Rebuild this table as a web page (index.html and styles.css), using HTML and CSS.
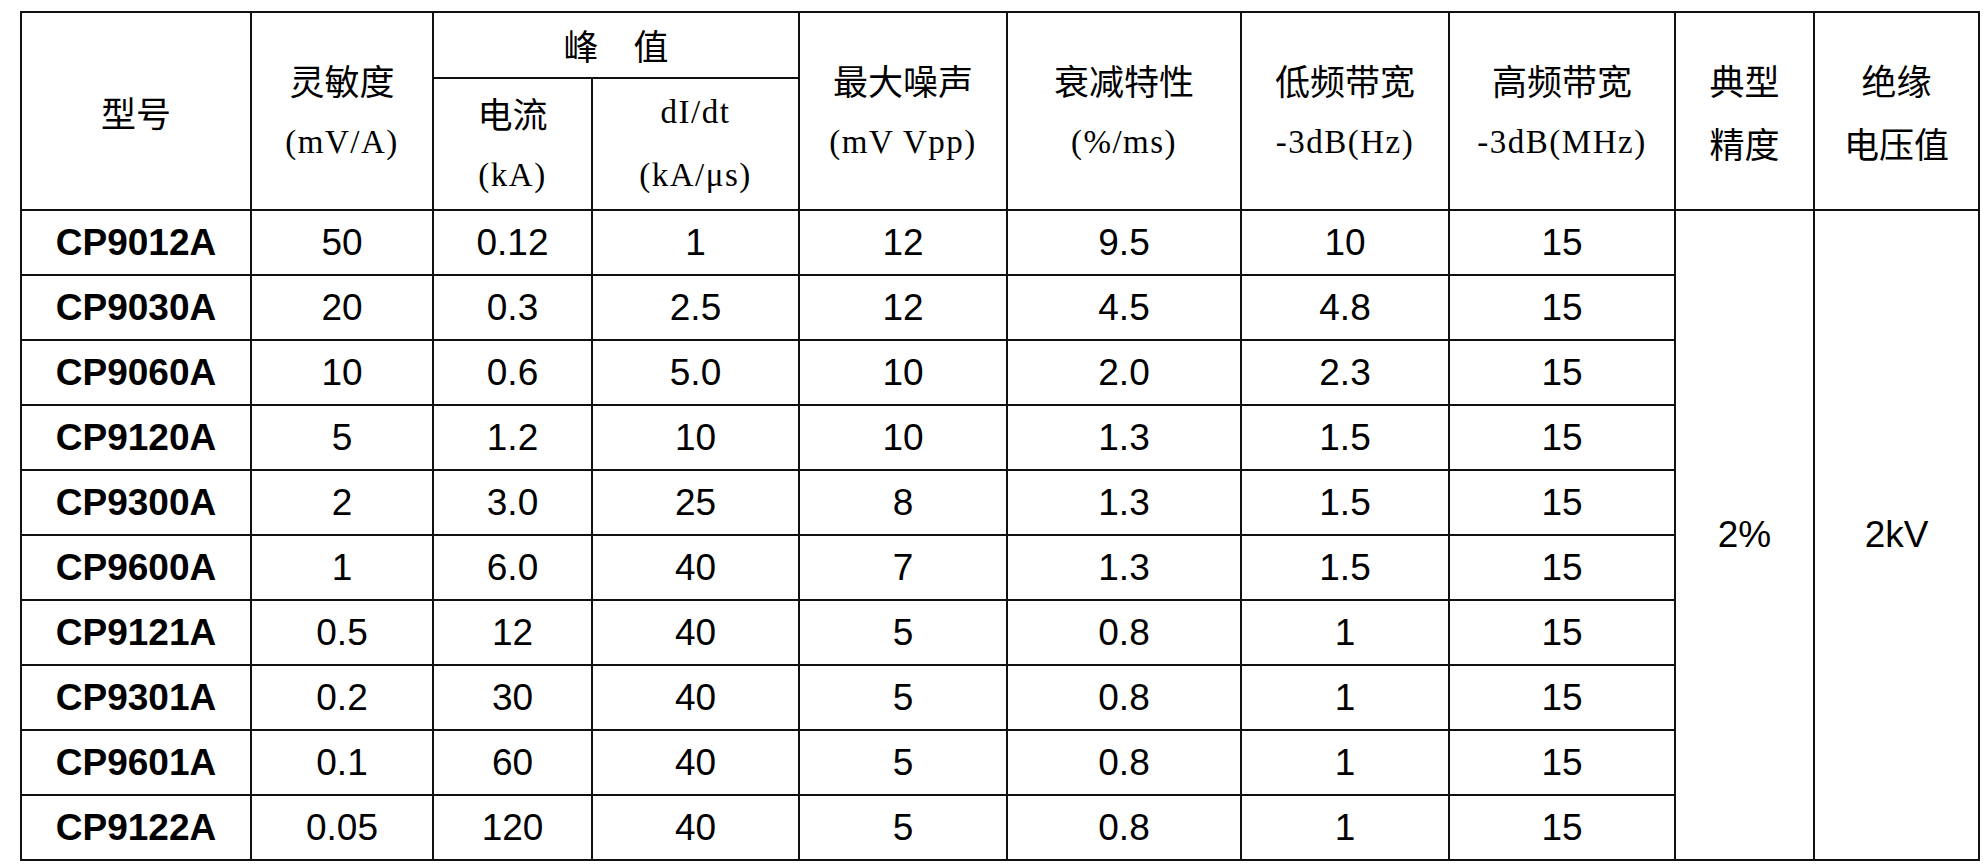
FILE: index.html
```html
<!DOCTYPE html>
<html lang="zh-CN">
<head>
<meta charset="utf-8">
<title>电流探头参数表</title>
<link rel="stylesheet" href="styles.css">
</head>
<body>
<div class="page">
<table class="spec">
  <colgroup>
    <col class="c-model"><col class="c-sens"><col class="c-cur"><col class="c-didt"><col class="c-noise">
    <col class="c-decay"><col class="c-low"><col class="c-high"><col class="c-acc"><col class="c-iso">
  </colgroup>
  <thead>
    <tr class="h1">
      <th rowspan="2"><span class="ln">型号</span></th>
      <th rowspan="2"><span class="ln">灵敏度</span><span class="ln lat">(mV/A)</span></th>
      <th colspan="2" class="peak">峰　值</th>
      <th rowspan="2"><span class="ln">最大噪声</span><span class="ln lat">(mV Vpp)</span></th>
      <th rowspan="2"><span class="ln">衰减特性</span><span class="ln lat">(%/ms)</span></th>
      <th rowspan="2"><span class="ln">低频带宽</span><span class="ln lat">-3dB(Hz)</span></th>
      <th rowspan="2"><span class="ln">高频带宽</span><span class="ln lat">-3dB(MHz)</span></th>
      <th rowspan="2"><span class="ln">典型</span><span class="ln">精度</span></th>
      <th rowspan="2"><span class="ln">绝缘</span><span class="ln">电压值</span></th>
    </tr>
    <tr class="h2">
      <th><span class="ln">电流</span><span class="ln lat">(kA)</span></th>
      <th><span class="ln lat">dI/dt</span><span class="ln lat">(kA/μs)</span></th>
    </tr>
  </thead>
  <tbody>
    <tr><td class="model">CP9012A</td><td>50</td><td>0.12</td><td>1</td><td>12</td><td>9.5</td><td>10</td><td>15</td><td rowspan="10">2%</td><td rowspan="10">2kV</td></tr>
    <tr><td class="model">CP9030A</td><td>20</td><td>0.3</td><td>2.5</td><td>12</td><td>4.5</td><td>4.8</td><td>15</td></tr>
    <tr><td class="model">CP9060A</td><td>10</td><td>0.6</td><td>5.0</td><td>10</td><td>2.0</td><td>2.3</td><td>15</td></tr>
    <tr><td class="model">CP9120A</td><td>5</td><td>1.2</td><td>10</td><td>10</td><td>1.3</td><td>1.5</td><td>15</td></tr>
    <tr><td class="model">CP9300A</td><td>2</td><td>3.0</td><td>25</td><td>8</td><td>1.3</td><td>1.5</td><td>15</td></tr>
    <tr><td class="model">CP9600A</td><td>1</td><td>6.0</td><td>40</td><td>7</td><td>1.3</td><td>1.5</td><td>15</td></tr>
    <tr><td class="model">CP9121A</td><td>0.5</td><td>12</td><td>40</td><td>5</td><td>0.8</td><td>1</td><td>15</td></tr>
    <tr><td class="model">CP9301A</td><td>0.2</td><td>30</td><td>40</td><td>5</td><td>0.8</td><td>1</td><td>15</td></tr>
    <tr><td class="model">CP9601A</td><td>0.1</td><td>60</td><td>40</td><td>5</td><td>0.8</td><td>1</td><td>15</td></tr>
    <tr><td class="model">CP9122A</td><td>0.05</td><td>120</td><td>40</td><td>5</td><td>0.8</td><td>1</td><td>15</td></tr>
  </tbody>
</table>
</div>
</body>
</html>
```

FILE: styles.css
```css
html, body {
  margin: 0;
  padding: 0;
  background: #ffffff;
}

.page {
  padding: 11px 0 0 20px;
}

.spec {
  border-collapse: collapse;
  table-layout: fixed;
  width: 1958px;
  color: #000000;
}

.spec th,
.spec td {
  border: 2px solid #111111;
  padding: 0;
  text-align: center;
  vertical-align: middle;
}

.c-model { width: 230px; }
.c-sens  { width: 182px; }
.c-cur   { width: 159px; }
.c-didt  { width: 207px; }
.c-noise { width: 208px; }
.c-decay { width: 234px; }
.c-low   { width: 208px; }
.c-high  { width: 226px; }
.c-acc   { width: 139px; }
.c-iso   { width: 165px; }

.spec th {
  font-family: "Noto Sans CJK SC", "Liberation Serif", serif;
  font-weight: 400;
  font-size: 35px;
  line-height: 40px;
}

.spec th .ln {
  display: block;
  height: 63px;
  line-height: 63px;
  overflow: hidden;
  white-space: nowrap;
}

.spec th .lat {
  font-family: "Liberation Serif", "Noto Sans CJK SC", serif;
  font-size: 33px;
  letter-spacing: 1.5px;
}

.h1 { height: 66px; }
.h2 { height: 132px; }

.spec td {
  font-family: "Liberation Sans", Arial, sans-serif;
  font-size: 37px;
  height: 63px;
  line-height: 40px;
}

.spec td.model {
  font-weight: 700;
}
```
